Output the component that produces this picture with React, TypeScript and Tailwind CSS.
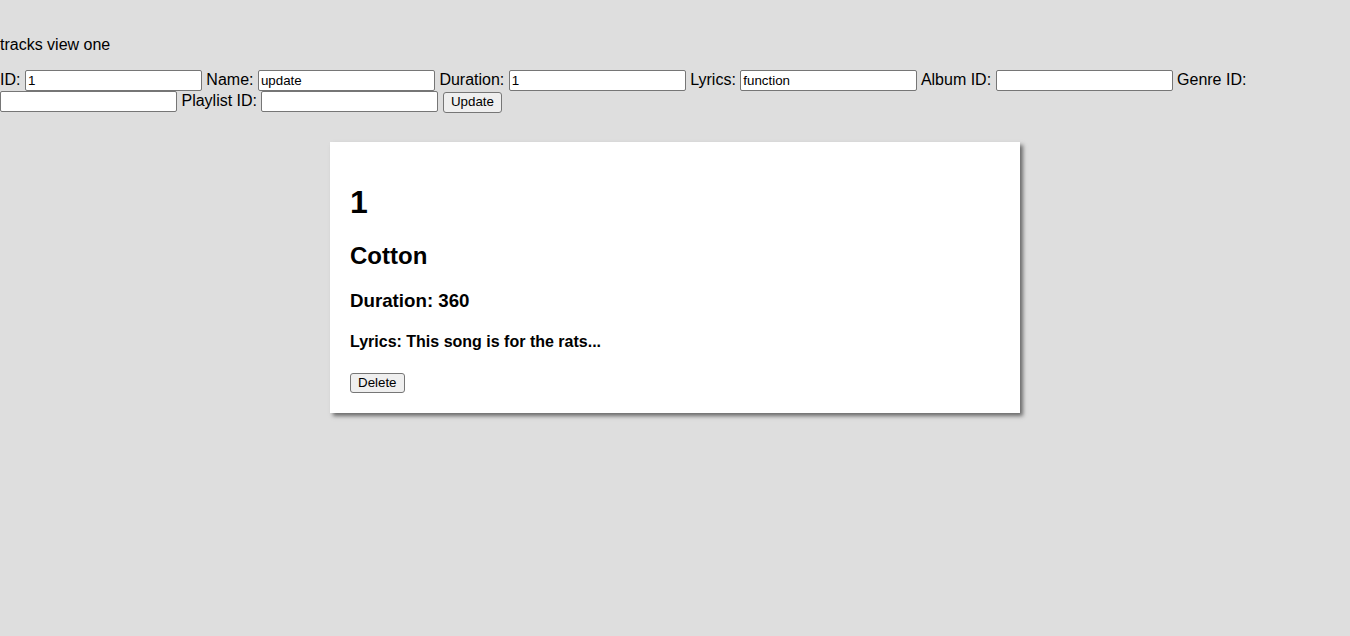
export default function App() {
  const inputCls =
    "inline-block align-baseline bg-white border border-[#767676] rounded-[2px] px-[2px] py-[1px] text-[13.33px] leading-[17px] h-[21px] w-[177px] text-black [font-family:'Liberation_Sans',Arial,sans-serif]";
  const btnCls =
    "inline-block bg-[#efefef] border border-[#767676] rounded-[3px] px-[7px] text-[13.33px] leading-[16px] text-black [font-family:'Liberation_Sans',Arial,sans-serif]";
  const fields: [string, string][] = [
    ["ID:", "1"],
    ["Name:", "update"],
    ["Duration:", "1"],
    ["Lyrics:", "function"],
    ["Album ID:", ""],
    ["Genre ID:", ""],
    ["Playlist ID:", ""],
  ];
  return (
    <div className="min-h-screen bg-[#dedede] text-black text-[16px] [font-family:'Liberation_Sans',Arial,sans-serif]">
      <div className="pt-[36px]">
        <p className="leading-[18px]">tracks view one</p>
        <form className="mt-[16px] leading-[20px]" onSubmit={(e) => e.preventDefault()}>
          {fields.map(([label, value]) => (
            <span key={label}>
              <label>{label} </label>
              <input className={inputCls} defaultValue={value} />{" "}
            </span>
          ))}
          <button type="submit" className={`${btnCls} h-[21px]`}>
            Update
          </button>
        </form>
      </div>
      <div className="mx-auto mt-[29px] w-[690px] bg-white p-[20px] shadow-[3px_3px_4px_#6b6b6b]">
        <h1 className="mt-[22px] text-[32px] font-bold leading-[37px]">1</h1>
        <h2 className="mt-[21px] text-[24px] font-bold leading-[28px]">Cotton</h2>
        <h3 className="mt-[20px] text-[18.72px] font-bold leading-[21px]">Duration: 360</h3>
        <h4 className="mt-[22px] text-[16px] font-bold leading-[18px]">Lyrics: This song is for the rats...</h4>
        <div className="mt-[22px] flex">
          <button className={`${btnCls} h-[20px]`}>Delete</button>
        </div>
      </div>
    </div>
  );
}
